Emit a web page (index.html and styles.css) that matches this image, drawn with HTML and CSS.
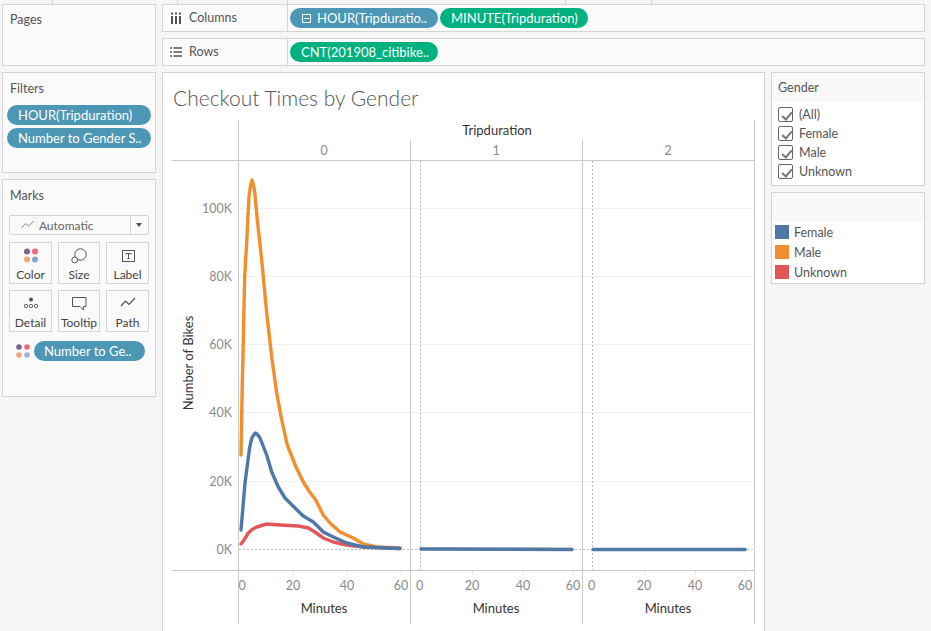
FILE: index.html
```html
<!DOCTYPE html>
<html lang="en">
<head>
  <meta charset="UTF-8">
  <title>Checkout Times by Gender</title>
  <link rel="stylesheet" href="styles.css">
</head>
<body>

<div class="top-ticks">
  <span class="tick t1"></span><span class="tick t2"></span><span class="tick t3"></span><span class="tick t4"></span><span class="tick t5"></span>
</div>

<div class="workspace">
  <!-- Left cards -->
  <div class="side">
    <div class="card pages"><div class="card-title">Pages</div></div>

    <div class="card filters">
      <div class="card-title">Filters</div>
      <div class="pill blue wide">HOUR(Tripduration)</div>
      <div class="pill blue wide">Number to Gender S..</div>
    </div>

    <div class="card marks">
      <div class="card-title">Marks</div>
      <div class="mark-type">
        <svg class="type-icon" width="14" height="10" viewBox="0 0 14 10"><path d="M0.5 8 L4.5 3.5 L7.5 6 L13 1" fill="none" stroke="#8a8a8a" stroke-width="1"/></svg>
        <span class="type-name">Automatic</span>
        <span class="type-arrow"></span>
      </div>
      <div class="mark-grid">
        <div class="mark-btn">
          <svg width="16" height="16" viewBox="0 0 16 16"><circle cx="4" cy="3.5" r="3" fill="#7b6390"/><circle cx="12" cy="3.5" r="3" fill="#f2647c"/><circle cx="4" cy="11.5" r="3" fill="#f2a67c"/><circle cx="12" cy="11.5" r="3" fill="#84a6cf"/></svg>
          <span>Color</span>
        </div>
        <div class="mark-btn">
          <svg width="16" height="16" viewBox="0 0 16 16"><circle cx="9.5" cy="6.5" r="5.7" fill="#fafafa" stroke="#555"/><circle cx="3.7" cy="12" r="2.9" fill="#fafafa" stroke="#555"/></svg>
          <span>Size</span>
        </div>
        <div class="mark-btn">
          <svg width="16" height="16" viewBox="0 0 16 16"><rect x="2.5" y="2.5" width="12" height="11" fill="none" stroke="#555"/><path d="M6 5.5 H11 M8.5 5.5 V10.5 M7.3 10.5 H9.7 M6 5.5 V6.5 M11 5.5 V6.5" fill="none" stroke="#555"/></svg>
          <span>Label</span>
        </div>
        <div class="mark-btn">
          <svg width="16" height="16" viewBox="0 0 16 16"><circle cx="8" cy="3.5" r="2" fill="#555"/><circle cx="3" cy="10" r="1.7" fill="none" stroke="#555" stroke-width="0.9"/><circle cx="8" cy="10" r="1.7" fill="none" stroke="#555" stroke-width="0.9"/><circle cx="13" cy="10" r="1.7" fill="none" stroke="#555" stroke-width="0.9"/></svg>
          <span>Detail</span>
        </div>
        <div class="mark-btn">
          <svg width="16" height="16" viewBox="0 0 16 16"><path d="M1.5 1.5 H15 V10.500 H12.500 L12.500 14 L9 10.500 H1.5 Z" fill="none" stroke="#555"/></svg>
          <span>Tooltip</span>
        </div>
        <div class="mark-btn">
          <svg width="16" height="16" viewBox="0 0 16 16"><path d="M1 10 L5.5 5 L9 8.500 L15 2" fill="none" stroke="#555" stroke-width="1.2"/></svg>
          <span>Path</span>
        </div>
      </div>
      <div class="mark-field">
        <svg width="14" height="14" viewBox="0 0 14 14"><circle cx="3" cy="3" r="2.8" fill="#7b6390"/><circle cx="11" cy="3" r="2.8" fill="#f2647c"/><circle cx="3" cy="11" r="2.8" fill="#f2a67c"/><circle cx="11" cy="11" r="2.8" fill="#9ab2d0"/></svg>
        <div class="pill blue field">Number to Ge..</div>
      </div>
    </div>
  </div>

  <div class="main">
    <!-- Shelves -->
    <div class="shelf">
      <div class="shelf-label">
        <svg width="12" height="12" viewBox="0 0 12 12"><path d="M2 4 V12 M6 4 V12 M10 4 V12 M2 0.5 V2.5 M6 0.5 V2.5 M10 0.5 V2.5" stroke="#555" stroke-width="2" fill="none"/></svg>
        <span>Columns</span>
      </div>
      <div class="shelf-pills">
        <div class="pill blue shelf-pill"><span class="collapse"></span>HOUR(Tripduratio..</div>
        <div class="pill green shelf-pill">MINUTE(Tripduration)</div>
      </div>
    </div>
    <div class="shelf">
      <div class="shelf-label">
        <svg width="12" height="10" viewBox="0 0 12 10"><path d="M0 1 H2 M3.5 1 H12 M0 5 H2 M3.5 5 H12 M0 9 H2 M3.5 9 H12" stroke="#555" stroke-width="1.6" fill="none"/></svg>
        <span>Rows</span>
      </div>
      <div class="shelf-pills">
        <div class="pill green shelf-pill">CNT(201908_citibike..</div>
      </div>
    </div>

    <div class="content">
      <div class="sheet">
        <div class="sheet-title">Checkout Times by Gender</div>
        <svg class="chart" width="601" height="520" viewBox="163 111 601 520">
          <!-- gridlines -->
          <g stroke="#f1f1f1" stroke-width="1">
            <path d="M239 208.5 H755 M239 276.5 H755 M239 344.5 H755 M239 412.5 H755 M239 481.5 H755"/>
          </g>
          <path d="M239 549.5 H755" stroke="#bdbdbd" stroke-dasharray="2 2"/>
          <path d="M420.5 161 V570 M592.5 161 V570" stroke="#bdbdbd" stroke-dasharray="2 2"/>
          <!-- frame -->
          <g stroke="#c8c8c8" stroke-width="1">
            <path d="M238.5 120 V624 M410.5 140 V624 M582.5 140 V624 M754.5 120 V624"/>
            <path d="M172 160.5 H755 M172 570.5 H755"/>
          </g>
          <g stroke="#e4e4e4" stroke-width="1">
            <path d="M293.5 571 V575 M347.5 571 V575 M401.5 571 V575 M472.5 571 V575 M523.5 571 V575 M573.5 571 V575 M644.5 571 V575 M695.5 571 V575 M745.5 571 V575"/>
          </g>

          <!-- headers -->
          <text class="axis-title" x="497" y="135" text-anchor="middle">Tripduration</text>
          <text class="tick-label" x="324" y="155" text-anchor="middle">0</text>
          <text class="tick-label" x="496" y="155" text-anchor="middle">1</text>
          <text class="tick-label" x="668" y="155" text-anchor="middle">2</text>

          <!-- y axis -->
          <text class="tick-label" x="232" y="213" text-anchor="end">100K</text>
          <text class="tick-label" x="232" y="281" text-anchor="end">80K</text>
          <text class="tick-label" x="232" y="349" text-anchor="end">60K</text>
          <text class="tick-label" x="232" y="417" text-anchor="end">40K</text>
          <text class="tick-label" x="232" y="486" text-anchor="end">20K</text>
          <text class="tick-label" x="232" y="554" text-anchor="end">0K</text>
          <text class="axis-title" transform="translate(193 363) rotate(-90)" text-anchor="middle">Number of Bikes</text>

          <!-- x axis -->
          <g class="tick-label" text-anchor="middle">
            <text x="242" y="590">0</text><text x="293" y="590">20</text><text x="347" y="590">40</text><text x="401" y="590">60</text>
            <text x="419.500" y="590">0</text><text x="472" y="590">20</text><text x="523" y="590">40</text><text x="573" y="590">60</text>
            <text x="591.500" y="590">0</text><text x="644" y="590">20</text><text x="695" y="590">40</text><text x="745" y="590">60</text>
          </g>
          <text class="axis-title" x="324" y="613" text-anchor="middle">Minutes</text>
          <text class="axis-title" x="496" y="613" text-anchor="middle">Minutes</text>
          <text class="axis-title" x="668" y="613" text-anchor="middle">Minutes</text>

          <!-- lines -->
          <g fill="none" stroke-width="3.4" stroke-linejoin="round" stroke-linecap="round">
            <polyline stroke="#f28e2b" points="241,455 241.600,420 242.300,383 243,357 243.800,315 244.700,277 245.700,258 246.700,243 248,215 249,197 250.500,186 252,180 253.500,185 254.700,192 257.300,220 261.700,260 266.700,313 271.700,357 276.700,393 281.700,420 287.300,445 296,467 303.300,482 309,491 315.700,500 323.300,515 330,523 340,532 353.300,538 363.300,544 376.700,547 400,548"/>
            <polyline stroke="#e15759" points="241,544 244,540 248.300,533 252,529.500 256.700,527 266.700,524 280,525 298.300,526 308.300,528 315,532 323.300,538 333.300,542 346.700,545 363.300,547 400,548.500"/>
            <polyline stroke="#4e79a7" points="241,530 245,483 249.300,450 250.800,442 252.300,437 255.300,433 257.500,434.500 260,438 266.700,455 271.700,472 278.300,487 285,498 295,508 303.300,516 313.300,522 318,526.500 323.300,532 333.300,537 346.700,543 363.300,547 400,548.500"/>
            <polyline stroke="#f0c9a4" stroke-width="2" points="421,548 500,548.500 572,548.500"/>
            <polyline stroke="#4e79a7" points="421,549 572,549.500"/>
            <polyline stroke="#4e79a7" points="593,549.500 745,549.500"/>
          </g>
        </svg>
      </div>

      <!-- Right cards -->
      <div class="side">
        <div class="card legend-card">
          <div class="legend-head">Gender</div>
          <div class="check-list">
            <div class="check-row"><span class="check"></span>(All)</div>
            <div class="check-row"><span class="check"></span>Female</div>
            <div class="check-row"><span class="check"></span>Male</div>
            <div class="check-row"><span class="check"></span>Unknown</div>
          </div>
        </div>
        <div class="card legend-card">
          <div class="legend-head empty"></div>
          <div class="color-list">
            <div class="color-row"><span class="swatch female"></span>Female</div>
            <div class="color-row"><span class="swatch male"></span>Male</div>
            <div class="color-row"><span class="swatch unknown"></span>Unknown</div>
          </div>
        </div>
      </div>
    </div>
  </div>
</div>

</body>
</html>
```

FILE: styles.css
```css
* {
  box-sizing: border-box;
}

html, body {
  margin: 0;
  height: 631px;
  overflow: hidden;
}

body {
  background-color: #f5f5f5;
  font-family: Lato, "Open Sans", sans-serif;
  font-size: 12px;
  color: #555;
}

.top-ticks {
  display: flex;
  height: 4px;
}

.tick {
  border-right: 1px solid #d4d4d4;
}

.t1 { width: 53px; }
.t2 { width: 125px; }
.t3 { width: 110px; }
.t4 { width: 278px; }
.t5 { width: 86px; }

.workspace {
  display: flex;
  gap: 6px;
  padding-left: 2px;
  height: 627px;
}

.side {
  display: flex;
  flex-direction: column;
  gap: 6px;
  width: 154px;
  flex: none;
}

.card {
  background-color: #fafafa;
  border: 1px solid #d4d4d4;
}

.card-title {
  padding: 7px 0 0 7px;
  font-size: 12.5px;
  line-height: 16px;
  color: #555;
}

.pages {
  height: 62px;
}

.filters {
  height: 101px;
}

.filters .card-title {
  padding-top: 8px;
  margin-bottom: 8px;
}

.marks {
  height: 218px;
}

.marks .card-title {
  padding-top: 8px;
  margin-bottom: 11px;
}

.pill {
  display: flex;
  align-items: center;
  height: 20px;
  border-radius: 10px;
  color: #fff;
  font-size: 13px;
  white-space: nowrap;
}

.blue {
  background-color: #4b97b5;
}

.green {
  background-color: #00b180;
}

.wide {
  width: 144px;
  margin: 0 0 3px 4px;
  padding-left: 11px;
}

.mark-type {
  display: flex;
  align-items: center;
  width: 140px;
  height: 20px;
  margin-left: 6px;
  border: 1px solid #d4d4d4;
  border-radius: 2px;
  background-color: #fafafa;
}

.type-icon {
  margin-left: 11px;
}

.type-name {
  margin-left: 4px;
  width: 92px;
  font-size: 12px;
  color: #666;
}

.type-arrow {
  width: 18px;
  height: 18px;
  border-left: 1px solid #d4d4d4;
  position: relative;
}

.type-arrow::after {
  content: "";
  position: absolute;
  left: 5px;
  top: 7px;
  border-left: 3.500px solid transparent;
  border-right: 3.500px solid transparent;
  border-top: 4px solid #555;
}

.mark-grid {
  display: grid;
  grid-template-columns: 43px 42px 43px;
  grid-auto-rows: 42px;
  gap: 6px;
  margin: 7px 0 0 6px;
}

.mark-btn {
  display: flex;
  flex-direction: column;
  align-items: center;
  padding-top: 5px;
  border: 1px solid #d4d4d4;
  font-size: 12px;
  line-height: 14px;
  color: #444;
}

.mark-btn svg {
  margin-bottom: 4px;
}

.mark-field {
  display: flex;
  align-items: center;
  gap: 4px;
  margin: 9px 0 0 13px;
}

.field {
  width: 111px;
  padding-left: 10px;
}

.main {
  display: flex;
  flex-direction: column;
  width: 763px;
}

.shelf {
  display: flex;
  flex: none;
  height: 28px;
  margin-bottom: 6px;
  background-color: #fafafa;
  border: 1px solid #d4d4d4;
}

.shelf-label {
  display: flex;
  align-items: center;
  gap: 7px;
  width: 125px;
  padding-left: 7px;
  padding-bottom: 1px;
  border-right: 1px solid #d4d4d4;
  font-size: 12.5px;
}

.shelf-pills {
  display: flex;
  align-items: center;
  gap: 2px;
  padding-left: 2px;
}

.shelf-pill {
  width: 148px;
  padding-left: 11px;
}

.collapse {
  width: 9px;
  height: 9px;
  margin: 0 6px 0 1px;
  border: 1px solid #fff;
  position: relative;
}

.collapse::after {
  content: "";
  position: absolute;
  left: 1px;
  right: 1px;
  top: 3px;
  height: 1px;
  background-color: #fff;
}

.content {
  display: flex;
  gap: 6px;
  flex: 1;
}

.sheet {
  width: 603px;
  height: 559px;
  background-color: #fff;
  border: 1px solid #d4d4d4;
  border-bottom: none;
}

.sheet-title {
  height: 38px;
  padding: 13px 0 0 10px;
  font-size: 21px;
  font-weight: 300;
  line-height: 24px;
  color: #555;
}

.chart {
  display: block;
}

.chart text {
  font-family: Lato, "Open Sans", sans-serif;
}

.tick-label,
.tick-label text {
  font-size: 12.5px;
  fill: #8a8a8a;
}

.axis-title {
  font-size: 13px;
  fill: #333;
}

.legend-card {
  background-color: #fff;
}

.legend-head {
  height: 29px;
  padding: 7px 0 0 6px;
  background-color: #f9f9f9;
  font-size: 12.5px;
  line-height: 16px;
}

.check-list {
  padding: 3px 0 5px 6px;
  height: 83px;
}

.check-row {
  display: flex;
  align-items: center;
  gap: 6px;
  height: 19px;
  font-size: 12.5px;
  color: #555;
}

.check {
  width: 15px;
  height: 15px;
  border: 1px solid #666;
  border-radius: 2px;
  position: relative;
}

.check::after {
  content: "";
  position: absolute;
  left: 4.500px;
  top: 1.500px;
  width: 4px;
  height: 8px;
  border-right: 2px solid #777;
  border-bottom: 2px solid #777;
  transform: rotate(40deg);
}

.color-list {
  padding: 0 0 0 3px;
  height: 61px;
}

.color-row {
  display: flex;
  align-items: center;
  gap: 5px;
  height: 20px;
  font-size: 12.5px;
  color: #555;
}

.swatch {
  width: 14px;
  height: 14px;
}

.female { background-color: #4e79a7; }
.male { background-color: #f28e2b; }
.unknown { background-color: #e15759; }
```
